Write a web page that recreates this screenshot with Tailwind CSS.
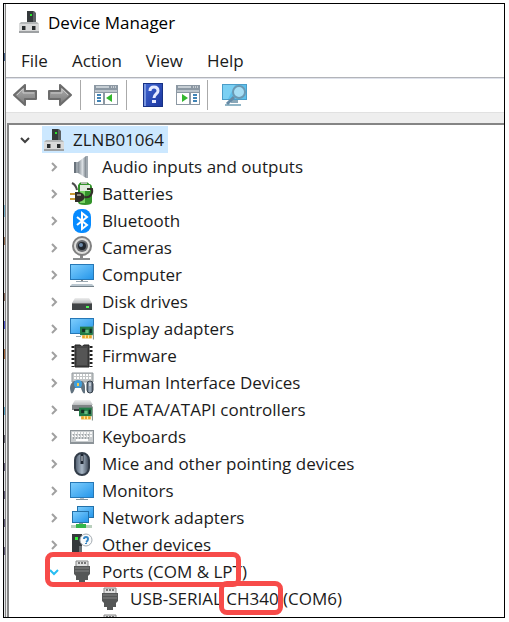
<!DOCTYPE html>
<html lang="en">
<head>
<meta charset="utf-8">
<meta name="viewport" content="width=device-width, initial-scale=1">
<title>Device Manager</title>
<script src="https://cdn.jsdelivr.net/npm/@tailwindcss/browser@4"></script>
</head>
<body class="h-screen bg-white p-[3px] pr-1 pb-1 font-['Open_Sans','Noto_Sans_CJK_SC',sans-serif] text-[17px] leading-[27px] text-[#1b1b1b]">
<svg class="absolute size-0" aria-hidden="true">
  <defs>
    <linearGradient id="screen" x1="0" y1="0" x2="1" y2="1"><stop offset="0" stop-color="#7dcdfd"/><stop offset="1" stop-color="#2596ea"/></linearGradient>
    <linearGradient id="cone" x1="0" y1="0" x2="1" y2="0"><stop offset="0" stop-color="#808890"/><stop offset=".55" stop-color="#dbe0e4"/><stop offset="1" stop-color="#7a838b"/></linearGradient>
    <linearGradient id="mouseg" x1="0" y1="0" x2="1" y2="0"><stop offset="0" stop-color="#4d5a6c"/><stop offset=".5" stop-color="#a8b7c6"/><stop offset="1" stop-color="#3c4756"/></linearGradient>
    <linearGradient id="arrowg" x1="0" y1="0" x2="0" y2="1"><stop offset="0" stop-color="#b5b5b5"/><stop offset="1" stop-color="#777777"/></linearGradient>
    <linearGradient id="helpg" x1="0" y1="0" x2="1" y2="1"><stop offset="0" stop-color="#3d62ce"/><stop offset="1" stop-color="#1c379f"/></linearGradient>
    <linearGradient id="topg" x1="0" y1="0" x2="0" y2="1"><stop offset="0" stop-color="#eeeeee"/><stop offset="1" stop-color="#b9bcbe"/></linearGradient>
  </defs>
  <symbol id="pc" viewBox="0 0 22 24">
    <path d="M9 1h7l2 2v11H9z" fill="#5b6063"/><path d="M9 1h6v12H9z" fill="#34393b"/><path d="M12 4h2v2h-2z" fill="#28e52e"/>
    <path d="M3 12h16l2 2v9H1v-9z" fill="#b4b7b8"/><path d="M1 14h20v7H1z" fill="#d9dada"/><path d="M1 21h20v2H1z" fill="#9ea1a3"/>
    <path d="M4 16h3v4H4zM14 16h3v4h-3z" fill="#292d2f"/><path d="M7 16h1v4H7zM17 16h1v4h-1z" fill="#888"/>
  </symbol>
  <symbol id="audio" viewBox="0 0 24 24"><path d="M4 7h5v11H4z" fill="#69727b"/><path d="M6 7h3v11H6z" fill="#9ca4ab"/><path d="M8 7 16 1v22L8 18z" fill="url(#cone)"/><path d="M16 1h2v22h-2z" fill="#a0a8af"/></symbol>
  <symbol id="battery" viewBox="0 0 24 24">
    <path d="M9 2q0-2 5-2t5 2h1q2 1 2 3v15q0 3-7 3t-7-3V3z" fill="#33932b"/><path d="M10 3h10v6H10z" fill="#e1eadf"/><path d="M10 9h5v12h-5z" fill="#7ad566"/><path d="M11 0h6v2h-6z" fill="#b5bdb2"/>
    <path d="M2 1q4 2 5 7" fill="none" stroke="#4b4b4b" stroke-width="2"/><path d="M0 12h7M0 17h7" stroke="#c99b35" stroke-width="2"/><path d="M5 10h4q5 1 6 5-1 4-6 5H5z" fill="#302e29"/><path d="M7 12h4v2H7z" fill="#8b867a"/><path d="M15 15c5 1 8-3 7-8H17" fill="none" stroke="#34302a" stroke-width="2"/>
  </symbol>
  <symbol id="bluetooth" viewBox="0 0 24 24"><rect x="3" width="18" height="24" rx="8" fill="#078bff"/><path d="m7 8 10 8-5 4V4l5 4-10 8" fill="none" stroke="#fff" stroke-width="2"/></symbol>
  <symbol id="camera" viewBox="0 0 24 24"><path d="M10 19h3v3h-3z" fill="#888"/><path d="M3 22h17v2H3z" fill="#8a8c8d"/><circle cx="12" cy="10" r="9" fill="#dededc" stroke="#818181" stroke-width="2"/><circle cx="12" cy="10" r="6" fill="#6a6d71"/><circle cx="12" cy="10" r="4" fill="#20262d"/><circle cx="11" cy="9" r="2" fill="#6d8ba9"/></symbol>
  <symbol id="computer" viewBox="0 0 24 24"><path d="M0 1h24v16H0z" fill="#2778b6"/><path d="M1 2h22v14H1z" fill="url(#screen)"/><path d="M11 17h2v1h-2z" fill="#888"/><path d="M6 18h12v1H6z" fill="#9ba9b3"/><path d="M2 21h20l2 2H0z" fill="#bac7d0"/><path d="M0 23h24v1H0z" fill="#75828b"/></symbol>
  <symbol id="disk" viewBox="0 0 24 24"><path d="m5 8h14l3 5H2z" fill="url(#topg)"/><path d="M2 13h20v7H2z" fill="#404446"/><path d="M2 13h20v1H2z" fill="#777"/><path d="M16 16h3v2h-3z" fill="#4df455"/></symbol>
  <symbol id="card" viewBox="0 0 14 14"><path d="M0 2h12v8H0z" fill="#227b46"/><path d="M2 4h3v3H2zM9 4h2v4H9z" fill="#132f24"/><path d="M5 5h3v3H5z" fill="#67bb80"/><path d="M2 10h9v3H2z" fill="#e9a52a"/><path d="M12 1h1v13h-1z" fill="#819086"/><path d="M5 10v3M8 10v3" stroke="#fff0a0"/></symbol>
  <symbol id="display" viewBox="0 0 24 24"><path d="M0 1h24v16H0z" fill="#2778b6"/><path d="M1 2h22v14H1z" fill="url(#screen)"/><path d="M6 19h5v1H6z" fill="#96a5af"/><use href="#card" x="10" y="7" width="15" height="16"/></symbol>
  <symbol id="firmware" viewBox="0 0 24 24"><path d="M5 1h5q2 3 4 0h5v22H5z" fill="#454545"/><path d="M7 4h10v17H7z" fill="#555"/><path d="M3 2v21M21 2v21" stroke="#222" stroke-width="3" stroke-dasharray="2 2"/><path d="M5 1h5q2 3 4 0h5v22H5z" fill="none" stroke="#222"/></symbol>
  <symbol id="hid" viewBox="0 0 24 24"><path d="M2 2h21v9H2z" fill="#c2c5c6" stroke="#92999d"/><path d="M4 4h17M4 7h17" stroke="#fff" stroke-width="2" stroke-dasharray="2 1"/><path d="M4 10h8q3 2 3 6v6q-2 2-4-5H5q-2 7-4 5-3-8 3-12" fill="#61727f"/><circle cx="8" cy="13" r="4" fill="#3f9edb"/><path d="M7 12h2v3H7z" fill="#f3c84c"/><rect x="17" y="10" width="6" height="12" rx="3" fill="url(#mouseg)" stroke="#36414b"/><path d="M20 12v3" stroke="#eee"/></symbol>
  <symbol id="ide" viewBox="0 0 24 24"><path d="M5 2h15l3 5H2z" fill="url(#topg)"/><path d="M2 7h20v5H2z" fill="#808486"/><path d="M4 11h6v2H4z" fill="#34383a"/><use href="#card" x="9" y="7" width="15" height="16"/></symbol>
  <symbol id="keyboard" viewBox="0 0 24 24"><path d="M0 5h24v14H0z" fill="#8c9398"/><path d="M1 6h22v11H1z" fill="#c9cdcf"/><path d="M2 8h20M2 11h20" stroke="#f9f9f9" stroke-width="2" stroke-dasharray="2 1"/><path d="M3 10h18M3 13h18" stroke="#70777b" stroke-dasharray="1 2"/><path d="M6 15h12" stroke="#fff" stroke-width="2"/></symbol>
  <symbol id="mouse" viewBox="0 0 24 24"><rect x="5" y="1" width="14" height="22" rx="7" fill="url(#mouseg)" stroke="#333d49" stroke-width="2"/><path d="M12 2v10" stroke="#1c2531" stroke-width="3"/><path d="M12 4v5" stroke="#e7edf3" stroke-width="1"/></symbol>
  <symbol id="monitor" viewBox="0 0 24 24"><path d="M0 3h24v16H0z" fill="#2778b6"/><path d="M1 4h22v14H1z" fill="url(#screen)"/><path d="M10 19h4v1h-4z" fill="#b8c1c7"/><path d="M6 20h12v1H6z" fill="#84949e"/></symbol>
  <symbol id="network" viewBox="0 0 24 24"><path d="M7 0h17v12H7z" fill="#2371a9"/><path d="M8 1h15v10H8z" fill="url(#screen)"/><path d="M2 5h17v12H2z" fill="#2371a9"/><path d="M3 6h15v10H3z" fill="url(#screen)"/><path d="M9 17h4v2H9z" fill="#81a294"/><path d="M1 19h21v3H1z" fill="#bad0bd"/><path d="M6 18h10v4H6z" fill="#33b64a"/></symbol>
  <symbol id="other" viewBox="0 0 24 24"><path d="M2 1h10v20H2z" fill="#34383b"/><path d="M9 13h3v8H9z" fill="#6d7275"/><path d="M5 4h3v3H5z" fill="#34ed3a"/><circle cx="16" cy="7" r="6" fill="#f9fafb" stroke="#a5acb2"/><path d="M14 6q0-2 2-2t2 2-2 3M16 10v1" fill="none" stroke="#3687c6" stroke-width="2"/></symbol>
  <symbol id="plug" viewBox="0 0 24 24"><path d="M6 1h12v6H6z" fill="#dfe0e0" stroke="#888"/><path d="M8 3h8" stroke="#777" stroke-width="2" stroke-dasharray="2 1"/><path d="M4 6h16v8l-2 2v4h-3v3H9v-3H6v-4l-2-2z" fill="#555757"/><path d="M5 8h14M5 11h14" stroke="#858686"/></symbol>
  <symbol id="chev" viewBox="0 0 10 10"><path d="m3 1 4 4-4 4" fill="none" stroke="#a0a0a0" stroke-width="2"/></symbol>
  <symbol id="down" viewBox="0 0 10 10"><path d="m1 3 4 4 4-4" fill="none" stroke="currentColor" stroke-width="2"/></symbol>
  <symbol id="back" viewBox="0 0 24 22"><path d="M1 11 12 1v6h11v8H12v6z" fill="url(#arrowg)" stroke="#6c6c6c" stroke-width="2" stroke-linejoin="round"/><path d="m4 11 6-6v4h11" fill="none" stroke="#c8c8c8"/></symbol>
</svg>

<main class="flex h-full overflow-hidden border border-black">
  <div class="flex w-px shrink-0 flex-col bg-[#e4e6e8]" aria-hidden="true">
    <span class="mt-[49px] h-2 bg-[#45628d]"></span><span class="mt-[144px] h-3 bg-[#7fb3cc]"></span><span class="mt-5 h-2 bg-[#967055]"></span><span class="mt-12 h-2 bg-[#8b6a5c]"></span><span class="mt-5 h-2 bg-[#5158d0]"></span><span class="mt-5 h-2.5 bg-[#a5683f]"></span><span class="mt-12 h-2 bg-[#61a6c7]"></span><span class="mt-5 h-2 bg-[#666370]"></span><span class="mt-5 h-2 bg-[#66607c]"></span><span class="mt-5 h-2 bg-[#66607c]"></span><span class="mt-5 h-2 bg-[#66607c]"></span><span class="mt-5 h-2 bg-[#66607c]"></span>
  </div>
  <section class="flex min-w-0 flex-1 flex-col border-l border-[#858585]">
    <header class="flex h-9 shrink-0 items-center gap-2 pl-3 text-black">
      <svg class="h-6 w-[22px]"><use href="#pc"/></svg><h1>Device Manager</h1>
    </header>
    <nav class="flex h-[37px] shrink-0 items-center gap-6 pt-1 pl-[15px]" aria-label="Menu">
      <button>File</button><button>Action</button><button>View</button><button>Help</button>
    </nav>
    <div class="flex h-[35px] shrink-0 items-center border-t border-[#b2b4b9] pl-[7px] shadow-[inset_0_1px_0_#dfe2eb]" role="toolbar" aria-label="Tools">
      <button aria-label="Back"><svg class="h-[22px] w-6"><use href="#back"/></svg></button>
      <button class="ml-[11px]" aria-label="Forward"><svg class="h-[22px] w-6 -scale-x-100"><use href="#back"/></svg></button>
      <span class="mx-2 h-[30px] w-px bg-[#aaa]"></span>
      <button class="ml-[5px]" aria-label="Show console tree"><svg class="h-5 w-6" viewBox="0 0 24 20"><path d="M0 0h24v20H0z" fill="#8c98a3"/><path d="M2 2h13" stroke="#c6ced4" stroke-width="2"/><path d="M17 2h5" stroke="#fff" stroke-dasharray="1 1"/><path d="M1 5h22v2H1z" fill="#bdc5cc"/><path d="M1 8h8v11H1zM11 8h12v11H11z" fill="#fff"/><path d="M3 10h4M3 13h4M3 16h4" stroke="#4184b6" stroke-width="2"/><path d="m18 9v8l-6-4z" fill="#32b72d"/></svg></button>
      <span class="mr-4 ml-2 h-[30px] w-px bg-[#aaa]"></span>
      <button aria-label="Help"><svg class="h-6 w-5" viewBox="0 0 20 24"><path d="M0 0h20v24H0z" fill="#173185"/><path d="M3 1h16v22H3z" fill="url(#helpg)"/><path d="M1 1h2v22H1z" fill="#7895df"/><path d="M7 8q0-4 4-4t4 4c0 3-4 3-4 7" fill="none" stroke="#e5eaff" stroke-width="3"/><path d="M9 17h4v3H9z" fill="#e5eaff"/></svg></button>
      <button class="ml-[13px]" aria-label="Show action pane"><svg class="h-5 w-6" viewBox="0 0 24 20"><path d="M0 0h24v20H0z" fill="#8c98a3"/><path d="M2 2h13" stroke="#c6ced4" stroke-width="2"/><path d="M17 2h5" stroke="#fff" stroke-dasharray="1 1"/><path d="M1 5h22v2H1z" fill="#bdc5cc"/><path d="M1 8h12v11H1zM15 8h8v11h-8z" fill="#fff"/><path d="M17 10h4M17 13h4M17 16h4" stroke="#4184b6" stroke-width="2"/><path d="m6 9v8l6-4z" fill="#32b72d"/></svg></button>
      <span class="mr-[14px] ml-[7px] h-[30px] w-px bg-[#aaa]"></span>
      <button aria-label="Scan for hardware changes"><svg class="h-6 w-[26px]" viewBox="0 0 26 24"><path d="M0 1h25v16H0z" fill="#4b9dc8"/><path d="M1 2h23v14H1z" fill="#5cc0ec"/><path d="M1 2h12L6 16H1z" fill="#7bd0f3"/><path d="M9 17h7v3H9z" fill="#8aa8b9"/><path d="M3 21h16v2H3z" fill="#91b6c7"/><path d="m12 14-7 7" stroke="#668aa5" stroke-width="3"/><circle cx="17" cy="9" r="6" fill="#a6def5" stroke="#6c99b3" stroke-width="2"/></svg></button>
    </div>
    <div class="flex flex-1 flex-col border-t border-[#e1e1e1] bg-[#eeeeee] pt-[10px] pl-px">
      <ul class="flex-1 border-t-2 border-l-2 border-[#858585] bg-white pt-px" role="tree" aria-label="Devices">
        <li class="flex h-[27px] items-center pl-[11px]" role="treeitem" aria-expanded="true"><button class="text-[#404040]" aria-label="Collapse ZLNB01064"><svg class="size-[10px]"><use href="#down"/></svg></button><span class="ml-3 flex h-full items-center gap-2 bg-[#cce8ff] pr-1 pl-px"><svg class="h-6 w-[22px]"><use href="#pc"/></svg>ZLNB01064</span></li>
        <li class="flex h-[27px] items-center pl-10" role="treeitem"><button aria-label="Expand"><svg class="size-[10px]"><use href="#chev"/></svg></button><svg class="mr-2 ml-[11px] size-6"><use href="#audio"/></svg>Audio inputs and outputs</li>
        <li class="flex h-[27px] items-center pl-10" role="treeitem"><button aria-label="Expand"><svg class="size-[10px]"><use href="#chev"/></svg></button><svg class="mr-2 ml-[11px] size-6"><use href="#battery"/></svg>Batteries</li>
        <li class="flex h-[27px] items-center pl-10" role="treeitem"><button aria-label="Expand"><svg class="size-[10px]"><use href="#chev"/></svg></button><svg class="mr-2 ml-[11px] size-6"><use href="#bluetooth"/></svg>Bluetooth</li>
        <li class="flex h-[27px] items-center pl-10" role="treeitem"><button aria-label="Expand"><svg class="size-[10px]"><use href="#chev"/></svg></button><svg class="mr-2 ml-[11px] size-6"><use href="#camera"/></svg>Cameras</li>
        <li class="flex h-[27px] items-center pl-10" role="treeitem"><button aria-label="Expand"><svg class="size-[10px]"><use href="#chev"/></svg></button><svg class="mr-2 ml-[11px] size-6"><use href="#computer"/></svg>Computer</li>
        <li class="flex h-[27px] items-center pl-10" role="treeitem"><button aria-label="Expand"><svg class="size-[10px]"><use href="#chev"/></svg></button><svg class="mr-2 ml-[11px] size-6"><use href="#disk"/></svg>Disk drives</li>
        <li class="flex h-[27px] items-center pl-10" role="treeitem"><button aria-label="Expand"><svg class="size-[10px]"><use href="#chev"/></svg></button><svg class="mr-2 ml-[11px] size-6"><use href="#display"/></svg>Display adapters</li>
        <li class="flex h-[27px] items-center pl-10" role="treeitem"><button aria-label="Expand"><svg class="size-[10px]"><use href="#chev"/></svg></button><svg class="mr-2 ml-[11px] size-6"><use href="#firmware"/></svg>Firmware</li>
        <li class="flex h-[27px] items-center pl-10" role="treeitem"><button aria-label="Expand"><svg class="size-[10px]"><use href="#chev"/></svg></button><svg class="mr-2 ml-[11px] size-6"><use href="#hid"/></svg>Human Interface Devices</li>
        <li class="flex h-[27px] items-center pl-10" role="treeitem"><button aria-label="Expand"><svg class="size-[10px]"><use href="#chev"/></svg></button><svg class="mr-2 ml-[11px] size-6"><use href="#ide"/></svg>IDE ATA/ATAPI controllers</li>
        <li class="flex h-[27px] items-center pl-10" role="treeitem"><button aria-label="Expand"><svg class="size-[10px]"><use href="#chev"/></svg></button><svg class="mr-2 ml-[11px] size-6"><use href="#keyboard"/></svg>Keyboards</li>
        <li class="flex h-[27px] items-center pl-10" role="treeitem"><button aria-label="Expand"><svg class="size-[10px]"><use href="#chev"/></svg></button><svg class="mr-2 ml-[11px] size-6"><use href="#mouse"/></svg>Mice and other pointing devices</li>
        <li class="flex h-[27px] items-center pl-10" role="treeitem"><button aria-label="Expand"><svg class="size-[10px]"><use href="#chev"/></svg></button><svg class="mr-2 ml-[11px] size-6"><use href="#monitor"/></svg>Monitors</li>
        <li class="flex h-[27px] items-center pl-10" role="treeitem"><button aria-label="Expand"><svg class="size-[10px]"><use href="#chev"/></svg></button><svg class="mr-2 ml-[11px] size-6"><use href="#network"/></svg>Network adapters</li>
        <li class="flex h-[27px] items-center pl-10" role="treeitem"><button aria-label="Expand"><svg class="size-[10px]"><use href="#chev"/></svg></button><svg class="mr-2 ml-[11px] size-6"><use href="#other"/></svg>Other devices</li>
        <li class="relative flex h-[27px] items-center pl-10" role="treeitem" aria-expanded="true"><button class="text-[#27bdf2]" aria-label="Collapse"><svg class="size-[10px]"><use href="#down"/></svg></button><svg class="mr-2 ml-[11px] size-6"><use href="#plug"/></svg>Ports (COM &amp; LPT)<span class="absolute -top-[6px] left-9 h-[35px] w-[196px] rounded-lg border-5 border-[#f74b49]"></span></li>
        <li class="flex h-[27px] items-center pl-[89px]" role="treeitem"><svg class="mr-2 size-6"><use href="#plug"/></svg><span>USB-SERIAL <span class="relative">CH340<span class="absolute -top-[6px] -right-1 -left-[7px] h-[34px] rounded-lg border-5 border-[#f74b49]"></span></span> (COM6)</span></li>
        <li class="-mb-6 flex h-[27px] items-center pl-[89px] whitespace-nowrap" role="treeitem"><svg class="mr-2 size-6"><use href="#plug"/></svg>蓝牙链接上的标准串行 (COM4)</li>
      </ul>
    </div>
  </section>
</main>
</body>
</html>
